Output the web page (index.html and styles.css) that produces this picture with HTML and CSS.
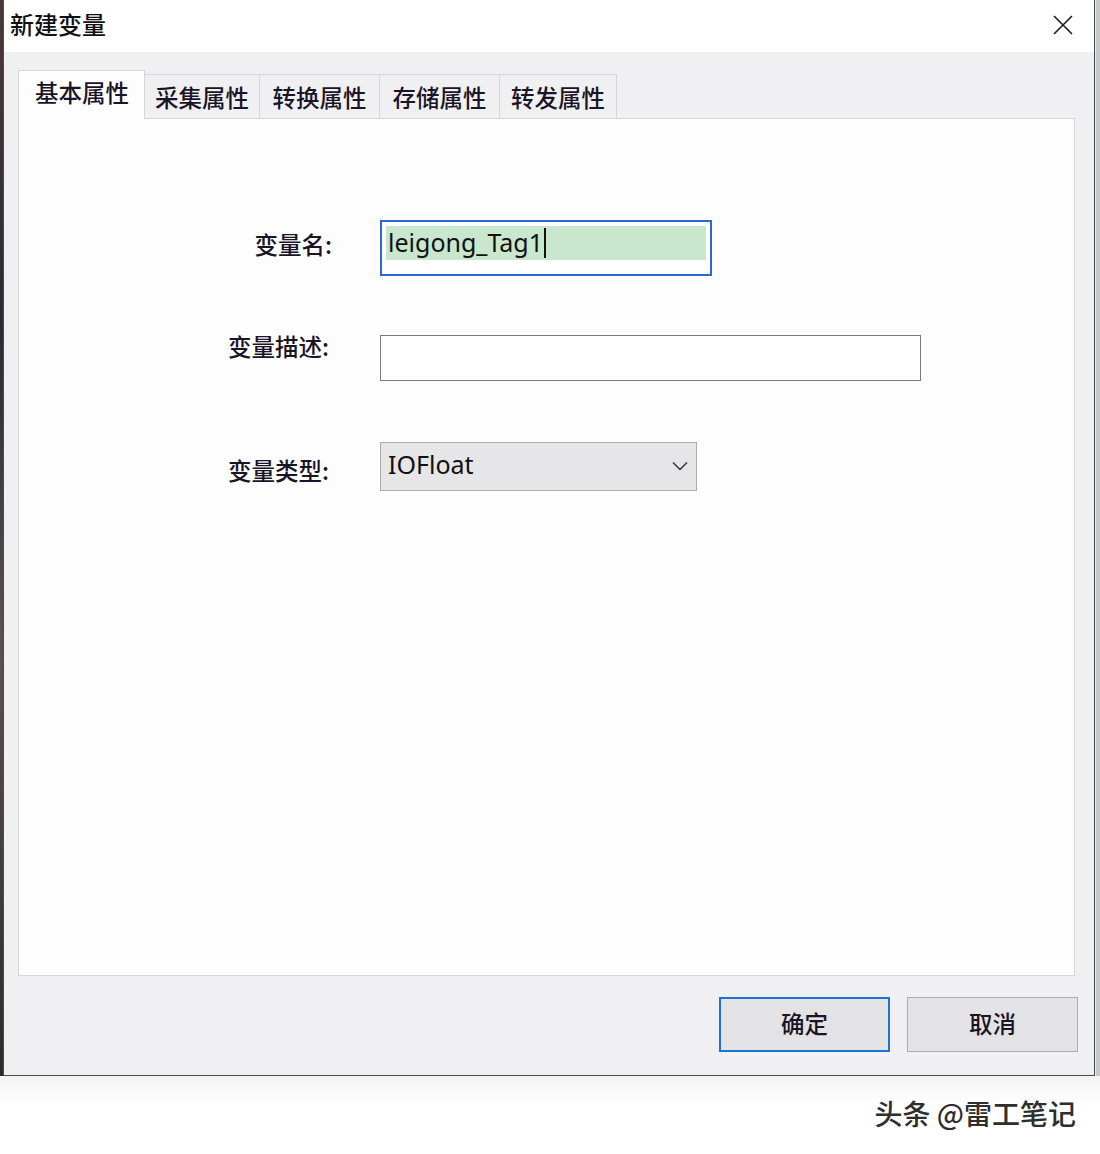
FILE: index.html
```html
<!DOCTYPE html>
<html lang="zh-CN">
<head>
<meta charset="utf-8">
<title>新建变量</title>
<link rel="stylesheet" href="styles.css">
</head>
<body>
<div class="screen">
  <div class="app-left"></div>
  <div class="dialog">
    <div class="titlebar">
      <span class="title">新建变量</span>
      <svg class="close" width="20" height="20" viewBox="0 0 20 20"><path d="M1 1 L19 19 M19 1 L1 19" stroke="#1a1a1a" stroke-width="1.6" fill="none"/></svg>
    </div>
    <div class="body">
      <div class="tabs">
        <div class="tab active">基本属性</div>
        <div class="tab t2">采集属性</div>
        <div class="tab t3">转换属性</div>
        <div class="tab t4">存储属性</div>
        <div class="tab t5">转发属性</div>
      </div>
      <div class="panel">
        <div class="form">
          <div class="label l1">变量名:</div>
          <div class="field name-field"><span class="sel"><span class="val">leigong_Tag1</span><span class="caret"></span></span></div>
          <div class="label l2">变量描述:</div>
          <div class="field desc-field"></div>
          <div class="label l3">变量类型:</div>
          <div class="field select-field"><span class="val">IOFloat</span>
            <svg class="chev" width="16" height="10" viewBox="0 0 16 10"><path d="M1 1.5 L8 8.5 L15 1.5" stroke="#333" stroke-width="1.5" fill="none"/></svg>
          </div>
        </div>
      </div>
      <div class="buttons">
        <div class="btn primary">确定</div>
        <div class="btn">取消</div>
      </div>
    </div>
  </div>
  <div class="app-right"></div>
</div>
<div class="footer">
  <span class="watermark">头条 @雷工笔记</span>
</div>
</body>
</html>
```
FILE: styles.css
```css
* { box-sizing: border-box; }
html, body {
  margin: 0;
  padding: 0;
  background: #ffffff;
  font-family: "Noto Sans CJK SC", "Noto Sans", sans-serif;
  color: #1a1a2a;
}
.screen {
  display: flex;
  height: 1076px;
}
.app-left {
  width: 3px;
  background: linear-gradient(#4a3a3a, #2a2a30 30%, #5a5050 60%, #2e2a2a);
}
.app-right {
  width: 5px;
  background: #c6cac6;
  border-left: 1px solid #e8e8e8;
}
.dialog {
  width: 1092px;
  display: flex;
  flex-direction: column;
  border-left: 1px solid #4a4a55;
  border-right: 1px solid #4a4a55;
  border-bottom: 1px solid #4a4a55;
  background: #f0f0f2;
}
.titlebar {
  height: 52px;
  background: #ffffff;
  display: flex;
  align-items: center;
  justify-content: space-between;
  padding: 0 21px 0 6px;
}
.title {
  font-size: 24px;
  font-weight: 500;
  color: #111;
  margin-top: -5px;
}
.close { margin-top: -3px; }
.body {
  flex: 1;
  display: flex;
  flex-direction: column;
  padding: 18px 19px 0 14px;
}
.tabs {
  display: flex;
  align-items: flex-end;
  height: 48px;
  position: relative;
  z-index: 1;
}
.tab {
  height: 44px;
  border: 1px solid #d6d6d8;
  border-bottom: none;
  border-left: none;
  background: #f0f0f2;
  font-size: 23.5px;
  font-weight: 500;
  display: flex;
  align-items: center;
  justify-content: center;
  color: #1a1426;
}
.tab.active {
  height: 49px;
  margin-bottom: -1px;
  width: 127px;
  background: #fdfdfe;
  border-left: 1px solid #d6d6d8;
  padding-bottom: 6px;
  justify-content: flex-start;
  padding-left: 16px;
}
.t2 { width: 115px; }
.t3 { width: 120px; }
.t4 { width: 120px; }
.t5 { width: 117px; }
.panel {
  height: 858px;
  background: #fdfdfe;
  border: 1px solid #d6d6d8;
  padding-top: 101px;
}
.form {
  display: grid;
  grid-template-columns: 313px auto;
  column-gap: 48px;
  align-items: start;
}
.label {
  display: flex;
  align-items: center;
  justify-content: flex-end;
  font-size: 23.5px;
  font-weight: 500;
  color: #1a1426;
}
.l1 { height: 56px; padding-bottom: 8px; }
.l2 { margin-top: 59px; height: 46px; padding-bottom: 24px; padding-right: 3px; }
.l3 { margin-top: 61px; height: 49px; padding-top: 6px; padding-right: 3px; }
.field { justify-self: start; }
.name-field {
  width: 332px;
  height: 56px;
  border: 2px solid #2a6ad0;
  background: #fff;
  padding: 4px 4px 0 4px;
}
.sel {
  display: flex;
  align-items: center;
  height: 34px;
  background: #c9e7cc;
  padding-left: 2px;
}
.val {
  font-family: "Noto Sans", "Noto Sans CJK SC", sans-serif;
  font-size: 25px;
  color: #111;
  margin-top: -3px;
}
.caret {
  width: 2px;
  height: 30px;
  background: #111;
  margin-left: 1px;
}
.desc-field {
  margin-top: 59px;
  width: 541px;
  height: 46px;
  border: 1px solid #7a7a7c;
  background: #fff;
}
.select-field {
  margin-top: 61px;
  width: 317px;
  height: 49px;
  border: 1px solid #adadad;
  background: #e6e6e8;
  display: flex;
  align-items: center;
  justify-content: space-between;
  padding: 0 8px 2px 7px;
}
.select-field .val { font-size: 25px; }
.buttons {
  display: flex;
  justify-content: flex-end;
  gap: 17px;
  margin-top: 21px;
  margin-right: -3px;
}
.btn {
  width: 171px;
  height: 55px;
  border: 1px solid #adadad;
  background: #e3e3e5;
  font-size: 23.5px;
  font-weight: 500;
  display: flex;
  align-items: center;
  justify-content: center;
  padding-bottom: 3px;
  color: #1a1426;
}
.btn.primary {
  border: 2px solid #1a74d6;
}
.footer {
  height: 78px;
  display: flex;
  justify-content: flex-end;
  align-items: center;
  padding-right: 24px;
  background: linear-gradient(#f3f3f3, #ffffff 30px);
}
.watermark {
  font-size: 28px;
  font-weight: 500;
  color: #2e2e2e;
  text-shadow: 1px 1px 0 #fff, -1px -1px 0 #fff;
  margin-top: -4px;
}
```
